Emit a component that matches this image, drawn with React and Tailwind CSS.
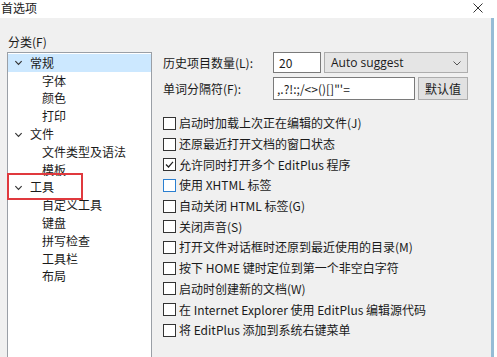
import React from "react";

const font = { fontFamily: '"Noto Sans CJK SC", "Noto Sans", sans-serif' };

function Chevron() {
  return (
    <svg className="w-[9px] h-[9px]" viewBox="0 0 10 10" fill="none" stroke="#333" strokeWidth="1.3">
      <path d="M1.5 3.5L5 7l3.5-3.5" />
    </svg>
  );
}

function TreeRow({ label, level = 0, selected }) {
  return (
    <div className={`h-[17.8px] flex items-center ${selected ? "bg-[#cce8ff]" : ""}`}>
      {level === 0 ? (
        <>
          <span className="w-[17px] flex justify-end pr-[2px]"><Chevron /></span>
          <span className="pl-[5px]">{label}</span>
        </>
      ) : (
        <span className="pl-[34px]">{label}</span>
      )}
    </div>
  );
}

function Check({ label, checked, focus }) {
  return (
    <div className="h-[20.7px] flex items-center">
      <span className={`w-[13px] h-[13px] bg-white border flex items-center justify-center ${focus ? "border-[#2b7fd0]" : "border-[#333]"}`}>
        {checked && (
          <svg className="w-[11px] h-[11px]" viewBox="0 0 11 11" fill="none" stroke="#222" strokeWidth="1.2">
            <path d="M2 5.5l2.5 2.5L9 2.8" />
          </svg>
        )}
      </span>
      <span className="pl-[3px]">{label}</span>
    </div>
  );
}

export default function App() {
  const tree = [
    ["常规", 0, true],
    ["字体", 1],
    ["颜色", 1],
    ["打印", 1],
    ["文件", 0],
    ["文件类型及语法", 1],
    ["模板", 1],
    ["工具", 0],
    ["自定义工具", 1],
    ["键盘", 1],
    ["拼写检查", 1],
    ["工具栏", 1],
    ["布局", 1],
  ];
  const checks = [
    ["启动时加载上次正在编辑的文件(J)"],
    ["还原最近打开文档的窗口状态"],
    ["允许同时打开多个 EditPlus 程序", true],
    ["使用 XHTML 标签", false, true],
    ["自动关闭 HTML 标签(G)"],
    ["关闭声音(S)"],
    ["打开文件对话框时还原到最近使用的目录(M)"],
    ["按下 HOME 键时定位到第一个非空白字符"],
    ["启动时创建新的文档(W)"],
    ["在 Internet Explorer 使用 EditPlus 编辑源代码"],
    ["将 EditPlus 添加到系统右键菜单"],
  ];

  return (
    <div className="w-[497px] h-[357px] bg-white flex flex-col overflow-hidden text-[12px] text-[#1a1a1a] leading-[16px]" style={font}>
      {/* title bar */}
      <div className="h-[18px] shrink-0 flex items-center justify-between pl-[1px] pr-[14px]">
        <span className="-mt-[2px]">首选项</span>
        <svg className="w-[10px] h-[10px] -mt-[2px]" viewBox="0 0 10 10" stroke="#333" strokeWidth="1">
          <path d="M0.5 0.5l9 9M9.5 0.5l-9 9" />
        </svg>
      </div>

      <div className="flex-1 flex">
        <div className="w-[491px] bg-[#f0f0f0] flex flex-col">
          <div className="pl-[8px] pt-[16px] h-[34px]">分类(F)</div>
          <div className="flex flex-1">
            {/* tree */}
            <div className="pl-[7px]">
              <div className="relative w-[145px] h-full bg-white border border-[#9a9fa6] border-b-0 pt-[1px]">
                {tree.map(([label, level, selected]) => (
                  <TreeRow key={label} label={label} level={level} selected={selected} />
                ))}
                <div className="absolute left-[-1px] top-[120px] w-[76px] h-[27px] border-2 border-[#e0393e]" />
              </div>
            </div>

            {/* options */}
            <div className="flex-1 pl-[11px] flex flex-col">
              <div className="flex items-center h-[21px]">
                <span className="w-[110px]">历史项目数量(L):</span>
                <div className="w-[48px] h-[21px] bg-white border border-[#7a7a7a] pl-[5px] flex items-center">20</div>
                <div className="ml-[3px] w-[144px] h-[21px] bg-[#e5e5e5] border border-[#adadad] flex items-center justify-between pl-[6px] pr-[6px]">
                  <span style={{ fontFamily: '"Open Sans", "Noto Sans", sans-serif' }}>Auto suggest</span>
                  <svg className="w-[8px] h-[8px]" viewBox="0 0 8 8" fill="none" stroke="#555" strokeWidth="1">
                    <path d="M0.5 2.5L4 6l3.5-3.5" />
                  </svg>
                </div>
              </div>
              <div className="flex items-center h-[23px] mt-[4px]">
                <span className="w-[110px]">单词分隔符(F):</span>
                <div className="w-[142px] h-[23px] bg-white border border-[#7a7a7a] pl-[3px] flex items-center">,.?!:;/&lt;&gt;(){}[]"'=</div>
                <div className="ml-[3px] w-[50px] h-[23px] bg-[#e1e1e1] border border-[#adadad] flex items-center justify-center">默认值</div>
              </div>
              <div className="mt-[13px] flex flex-col">
                {checks.map(([label, checked, focus]) => (
                  <Check key={label} label={label} checked={checked} focus={focus} />
                ))}
              </div>
            </div>
          </div>
        </div>
        <div className="w-[3px] bg-[#95bcd6]" />
      </div>
    </div>
  );
}
